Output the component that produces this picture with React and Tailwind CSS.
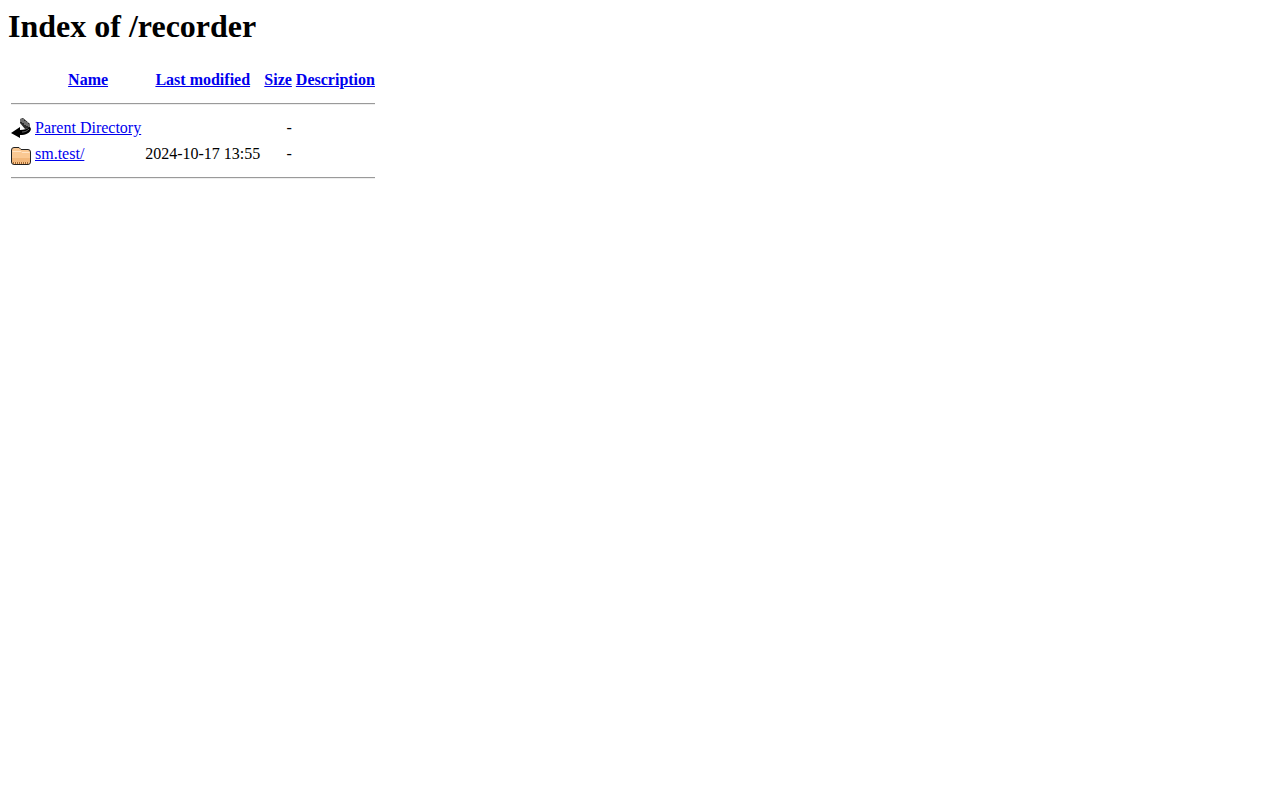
const BackIcon = () => (
  <svg width="20" height="22" viewBox="0 0 20 22" className="block">
    <path d="M9 2 L12 1 L19 7 L19 11 L14 12 L9 6 Z" fill="#2a2a2a" />
    <path d="M10 2 L10 5 M12 2 L12 6 M14 4 L14 8 M16 5 L16 9 M18 7 L18 10" stroke="#b5b5b5" strokeWidth="1" />
    <path d="M9 10 L9 13 C13 13 16 12 19 10 L20 12 C19 16 15 18 9 18 L9 21 L0 16 Z" fill="#000" />
    <path d="M11 15 C14 15 16 14 18 12" stroke="#666" strokeWidth="1" fill="none" />
  </svg>
);

const FolderIcon = () => (
  <svg width="20" height="22" viewBox="0 0 20 22" className="block">
    <path d="M0.5 7 Q0.5 4.5 3 4.5 L8 4.5 L10 6.5 L17 6.5 Q19.5 6.5 19.5 9 L19.5 19 Q19.5 21.5 17 21.5 L3 21.5 Q0.5 21.5 0.5 19 Z" fill="#fac892" stroke="#222" strokeWidth="1" />
    <path d="M1.5 8.5 L10 8.5 L11 9.5 L18.5 9.5" stroke="#ffe3c4" strokeWidth="1" fill="none" />
    <path d="M1 15 L19 15 L19 19 L1 19 Z" fill="#f2b77a" />
    <path d="M2 20 L18 20" stroke="#a8682e" strokeWidth="2" strokeDasharray="1 1" />
  </svg>
);

const Rule = () => (
  <tr>
    <th colSpan={5} className="p-px">
      <hr className="my-2 border-t border-b border-t-[#9a9a9a] border-b-[#eeeeee]" />
    </th>
  </tr>
);

const Head = ({ children }) => (
  <th className="p-px text-center font-bold">
    <a href="#" className="text-[#0000ee] underline">{children}</a>
  </th>
);

const Row = ({ icon, name, date }) => (
  <tr>
    <td className="p-px align-middle">{icon}</td>
    <td className="p-px align-middle">
      <a href="#" className="text-[#0000ee] underline">{name}</a>
    </td>
    <td className="p-px text-right align-middle">{date}</td>
    <td className="p-px text-right align-middle">-</td>
    <td className="p-px align-middle"></td>
  </tr>
);

export default function App() {
  return (
    <div className="min-h-[800px] bg-white p-2 text-base text-black font-['Liberation_Serif',serif]">
      <h1 className="mb-[21px] text-[32px] leading-[37px] font-bold">Index of /recorder</h1>
      <table className="border-separate border-spacing-[2px] leading-[18px]">
        <tbody>
          <tr>
            <th className="p-px w-[22px] h-6"></th>
            <Head>Name</Head>
            <Head>Last modified</Head>
            <Head>Size</Head>
            <Head>Description</Head>
          </tr>
          <Rule />
          <Row icon={<BackIcon />} name="Parent Directory" date="" />
          <Row icon={<FolderIcon />} name="sm.test/" date="2024-10-17 13:55" />
          <Rule />
        </tbody>
      </table>
    </div>
  );
}
